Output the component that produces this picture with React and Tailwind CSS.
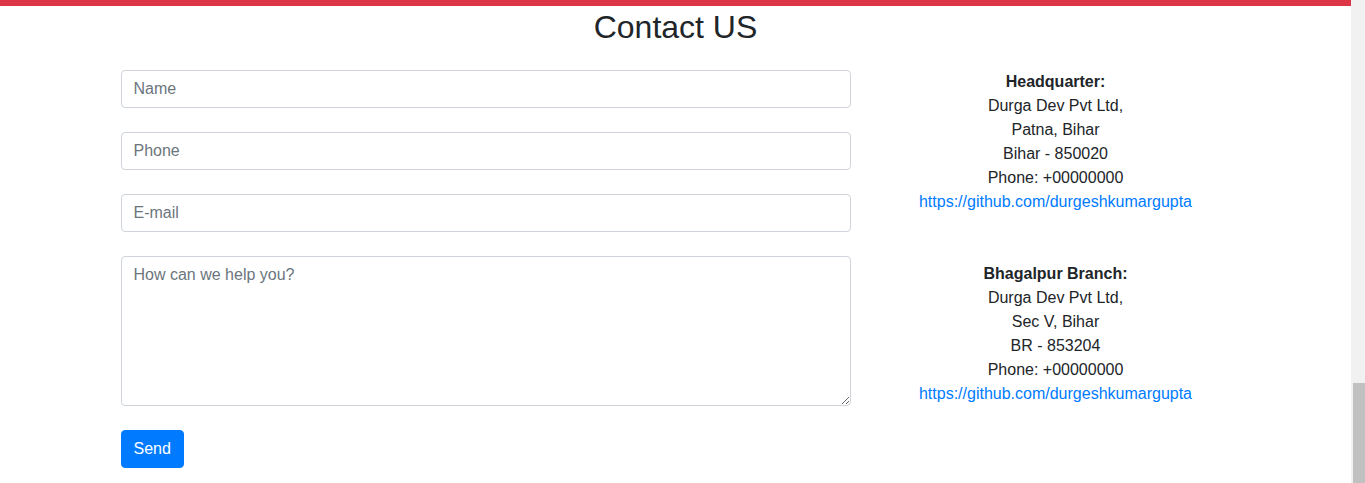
import React from 'react';

const offices = [
    {
        title: 'Headquarter:',
        lines: ['Durga Dev Pvt Ltd,', 'Patna, Bihar', 'Bihar - 850020', 'Phone: +00000000'],
    },
    {
        title: 'Bhagalpur Branch:',
        lines: ['Durga Dev Pvt Ltd,', 'Sec V, Bihar', 'BR - 853204', 'Phone: +00000000'],
    },
];

const inputClass =
    'block w-full h-[38px] px-3 border border-[#ced4da] rounded-[4px] bg-white text-base text-[#495057] placeholder:text-[#6c757d] outline-none';

const App = () => {
    return (
        <div className="flex h-[483px] overflow-hidden bg-white font-['Liberation_Sans',Arial,sans-serif] text-[#212529]">
            <div className="flex-1 flex flex-col">
                <div className="h-[6px] bg-[#dc3545]"></div>
                <h2 className="mt-[2px] mb-[24px] text-center text-[32px] leading-[1.2] font-normal">Contact US</h2>

                <div className="w-[1140px] mx-auto flex">
                    {/* form */}
                    <div className="w-[760px] px-[15px]">
                        <input type="text" placeholder="Name" className={`${inputClass} mb-[24px]`} />
                        <input type="text" placeholder="Phone" className={`${inputClass} mb-[24px]`} />
                        <input type="email" placeholder="E-mail" className={`${inputClass} mb-[24px]`} />
                        <textarea
                            placeholder="How can we help you?"
                            className="block w-full h-[150px] px-3 py-[6px] border border-[#ced4da] rounded-[4px] bg-white text-base leading-6 text-[#495057] placeholder:text-[#6c757d] outline-none mb-[24px]"
                        ></textarea>
                        <button className="h-[38px] px-3 border border-[#007bff] rounded-[4px] bg-[#007bff] text-white text-base">Send</button>
                    </div>

                    {/* addresses */}
                    <div className="w-[380px] px-[15px] text-center text-base leading-6">
                        {offices.map((office, i) => (
                            <div key={office.title} className={i > 0 ? 'mt-[48px]' : ''}>
                                <p className="font-bold">{office.title}</p>
                                {office.lines.map((line) => (
                                    <p key={line}>{line}</p>
                                ))}
                                <a href="#" className="text-[#007bff]">https://github.com/durgeshkumargupta</a>
                            </div>
                        ))}
                    </div>
                </div>
            </div>

            {/* page scrollbar, scrolled to the bottom */}
            <div className="w-[14px] bg-[#f1f1f1] flex flex-col justify-end items-end">
                <div className="w-[12px] h-[100px] bg-[#c1c1c1]"></div>
            </div>
        </div>
    );
};

export default App;
